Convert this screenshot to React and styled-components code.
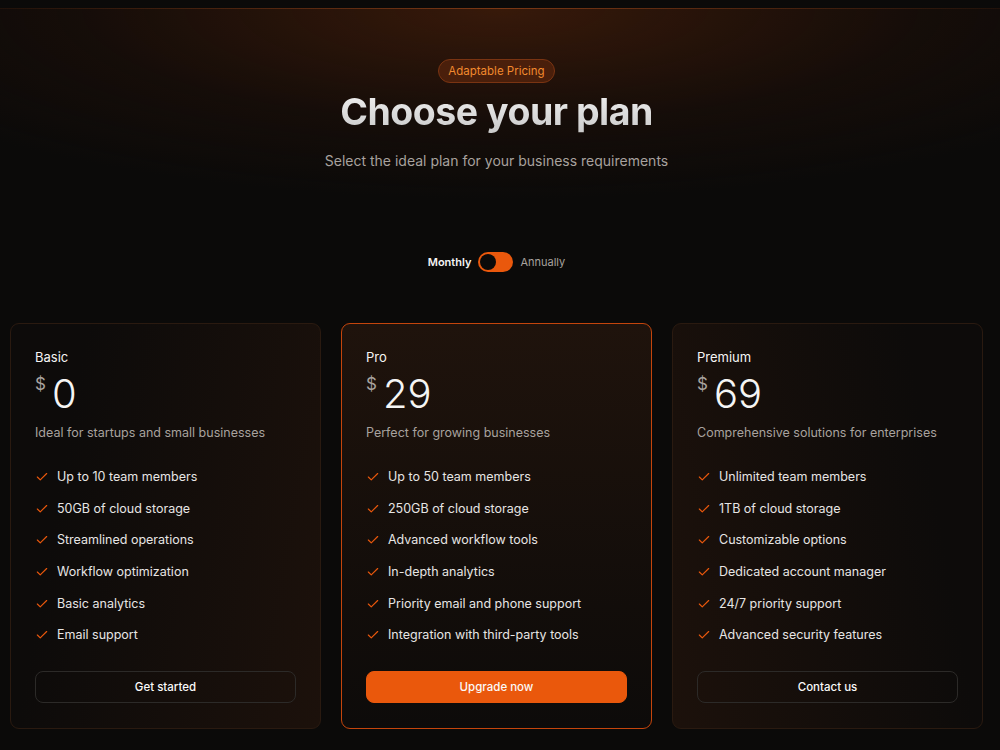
import { useState } from 'react'
import styled, { createGlobalStyle } from 'styled-components'
import { Check } from 'lucide-react'

const GlobalStyle = createGlobalStyle`
    body {
        margin: 0;
        background: #0b0a09;
        font-family: Inter, "Noto Sans", sans-serif;
        color: #f5f5f4;
    }
`

const Page = styled.div`
    min-height: 750px;
    padding-top: 8px;
    background: #0b0a09;
`

const Hero = styled.header`
    display: flex;
    flex-direction: column;
    align-items: center;
    padding: 50px 7px 0 0;
    background:
        radial-gradient(ellipse 70% 190px at 50% 0, rgba(70, 30, 10, 0.75), rgba(40, 18, 8, 0.35) 60%, rgba(11, 10, 9, 0) 100%);
    border-top: 1px solid transparent;
    border-image: linear-gradient(90deg, rgba(120, 50, 15, 0.2), rgba(170, 75, 25, 0.7) 50%, rgba(120, 50, 15, 0.2)) 1;
`

const Badge = styled.span`
    padding: 3px 9px;
    border-radius: 999px;
    font-size: 11.5px;
    line-height: 16px;
    color: #f28a2e;
    background: #4a1f0b;
    border: 1px solid #7a3412;
`

const Title = styled.h1`
    margin: 7px 0 0;
    font-size: 37.5px;
    line-height: 44px;
    font-weight: 700;
    letter-spacing: -0.5px;
    background: linear-gradient(180deg, #f2f2f2, #c9c9c9);
    -webkit-background-clip: text;
    background-clip: text;
    color: transparent;
`

const Subtitle = styled.p`
    margin: 17px 0 0;
    font-size: 14px;
    line-height: 20px;
    color: #a8a29e;
`

const Billing = styled.div`
    display: flex;
    align-items: center;
    gap: 7px;
    margin-top: 81px;
    font-size: 11px;
`

const BillingLabel = styled.span`
    color: ${p => (p.$active ? '#f5f5f4' : '#a8a29e')};
    font-weight: ${p => (p.$active ? 600 : 400)};
`

const Switch = styled.button`
    width: 35px;
    height: 20px;
    padding: 2px;
    border: none;
    border-radius: 999px;
    background: #ea580c;
    display: flex;
    justify-content: ${p => (p.$on ? 'flex-end' : 'flex-start')};
    cursor: pointer;
`

const Knob = styled.span`
    width: 16px;
    height: 16px;
    border-radius: 50%;
    background: #0b0a09;
`

const Plans = styled.section`
    display: grid;
    grid-template-columns: repeat(3, 311px);
    gap: 20px;
    margin: 51px 0 0 10px;
`

const cardBackgrounds = {
    left: 'linear-gradient(100deg, #0d0b0a 20%, #1c110b 100%)',
    center: 'linear-gradient(180deg, #1f130c 0%, #120d0a 70%, #0d0b0a 100%)',
    right: 'linear-gradient(260deg, #0d0b0a 20%, #1c110b 100%)',
}

const Card = styled.article`
    display: flex;
    flex-direction: column;
    padding: 23px 24px 25px;
    border-radius: 9px;
    background: ${p => cardBackgrounds[p.$side]};
    border: 1px solid ${p => (p.$featured ? '#c4450c' : '#2a1a10')};
`

const PlanName = styled.h3`
    margin: 0;
    font-size: 13px;
    line-height: 20px;
    font-weight: 400;
    color: #f5f5f4;
`

const Price = styled.div`
    display: flex;
    align-items: flex-start;
    gap: 6px;
    margin-top: 4px;
`

const Currency = styled.span`
    font-size: 17px;
    line-height: 26px;
    color: #a8a29e;
`

const Amount = styled.span`
    font-size: 40px;
    line-height: 46px;
    font-weight: 300;
    color: #f5f5f4;
`

const Description = styled.p`
    margin: 6px 0 0;
    font-size: 12.5px;
    line-height: 20px;
    color: #a8a29e;
`

const Features = styled.ul`
    list-style: none;
    margin: 24px 0 0;
    padding: 0;
    display: flex;
    flex-direction: column;
    gap: 11.7px;
`

const Feature = styled.li`
    display: flex;
    align-items: center;
    gap: 8px;
    font-size: 12.5px;
    line-height: 20px;
    color: #e7e5e4;
`

const CTA = styled.button`
    margin-top: 26px;
    height: 32px;
    border-radius: 8px;
    font-family: inherit;
    font-size: 11.5px;
    font-weight: 500;
    color: #fafaf9;
    cursor: pointer;
    background: ${p => (p.$primary ? '#ea580c' : 'transparent')};
    border: 1px solid ${p => (p.$primary ? '#ea580c' : '#2c2a28')};
`

const plans = [
    {
        name: 'Basic',
        monthly: 0,
        annual: 0,
        blurb: 'Ideal for startups and small businesses',
        side: 'left',
        cta: 'Get started',
        features: [
            'Up to 10 team members',
            '50GB of cloud storage',
            'Streamlined operations',
            'Workflow optimization',
            'Basic analytics',
            'Email support',
        ],
    },
    {
        name: 'Pro',
        monthly: 29,
        annual: 290,
        blurb: 'Perfect for growing businesses',
        side: 'center',
        featured: true,
        cta: 'Upgrade now',
        features: [
            'Up to 50 team members',
            '250GB of cloud storage',
            'Advanced workflow tools',
            'In-depth analytics',
            'Priority email and phone support',
            'Integration with third-party tools',
        ],
    },
    {
        name: 'Premium',
        monthly: 69,
        annual: 690,
        blurb: 'Comprehensive solutions for enterprises',
        side: 'right',
        cta: 'Contact us',
        features: [
            'Unlimited team members',
            '1TB of cloud storage',
            'Customizable options',
            'Dedicated account manager',
            '24/7 priority support',
            'Advanced security features',
        ],
    },
]

export default function App() {
    const [annual, setAnnual] = useState(false)

    return (
        <Page>
            <GlobalStyle />
            <Hero>
                <Badge>Adaptable Pricing</Badge>
                <Title>Choose your plan</Title>
                <Subtitle>Select the ideal plan for your business requirements</Subtitle>
                <Billing>
                    <BillingLabel $active={!annual}>Monthly</BillingLabel>
                    <Switch $on={annual} onClick={() => setAnnual(!annual)}>
                        <Knob />
                    </Switch>
                    <BillingLabel $active={annual}>Annually</BillingLabel>
                </Billing>
            </Hero>

            <Plans>
                {plans.map(plan => (
                    <Card key={plan.name} $side={plan.side} $featured={plan.featured}>
                        <PlanName>{plan.name}</PlanName>
                        <Price>
                            <Currency>$</Currency>
                            <Amount>{annual ? plan.annual : plan.monthly}</Amount>
                        </Price>
                        <Description>{plan.blurb}</Description>
                        <Features>
                            {plan.features.map(f => (
                                <Feature key={f}>
                                    <Check size={14} color="#ea580c" strokeWidth={2} />
                                    {f}
                                </Feature>
                            ))}
                        </Features>
                        <CTA $primary={plan.featured}>{plan.cta}</CTA>
                    </Card>
                ))}
            </Plans>
        </Page>
    )
}
